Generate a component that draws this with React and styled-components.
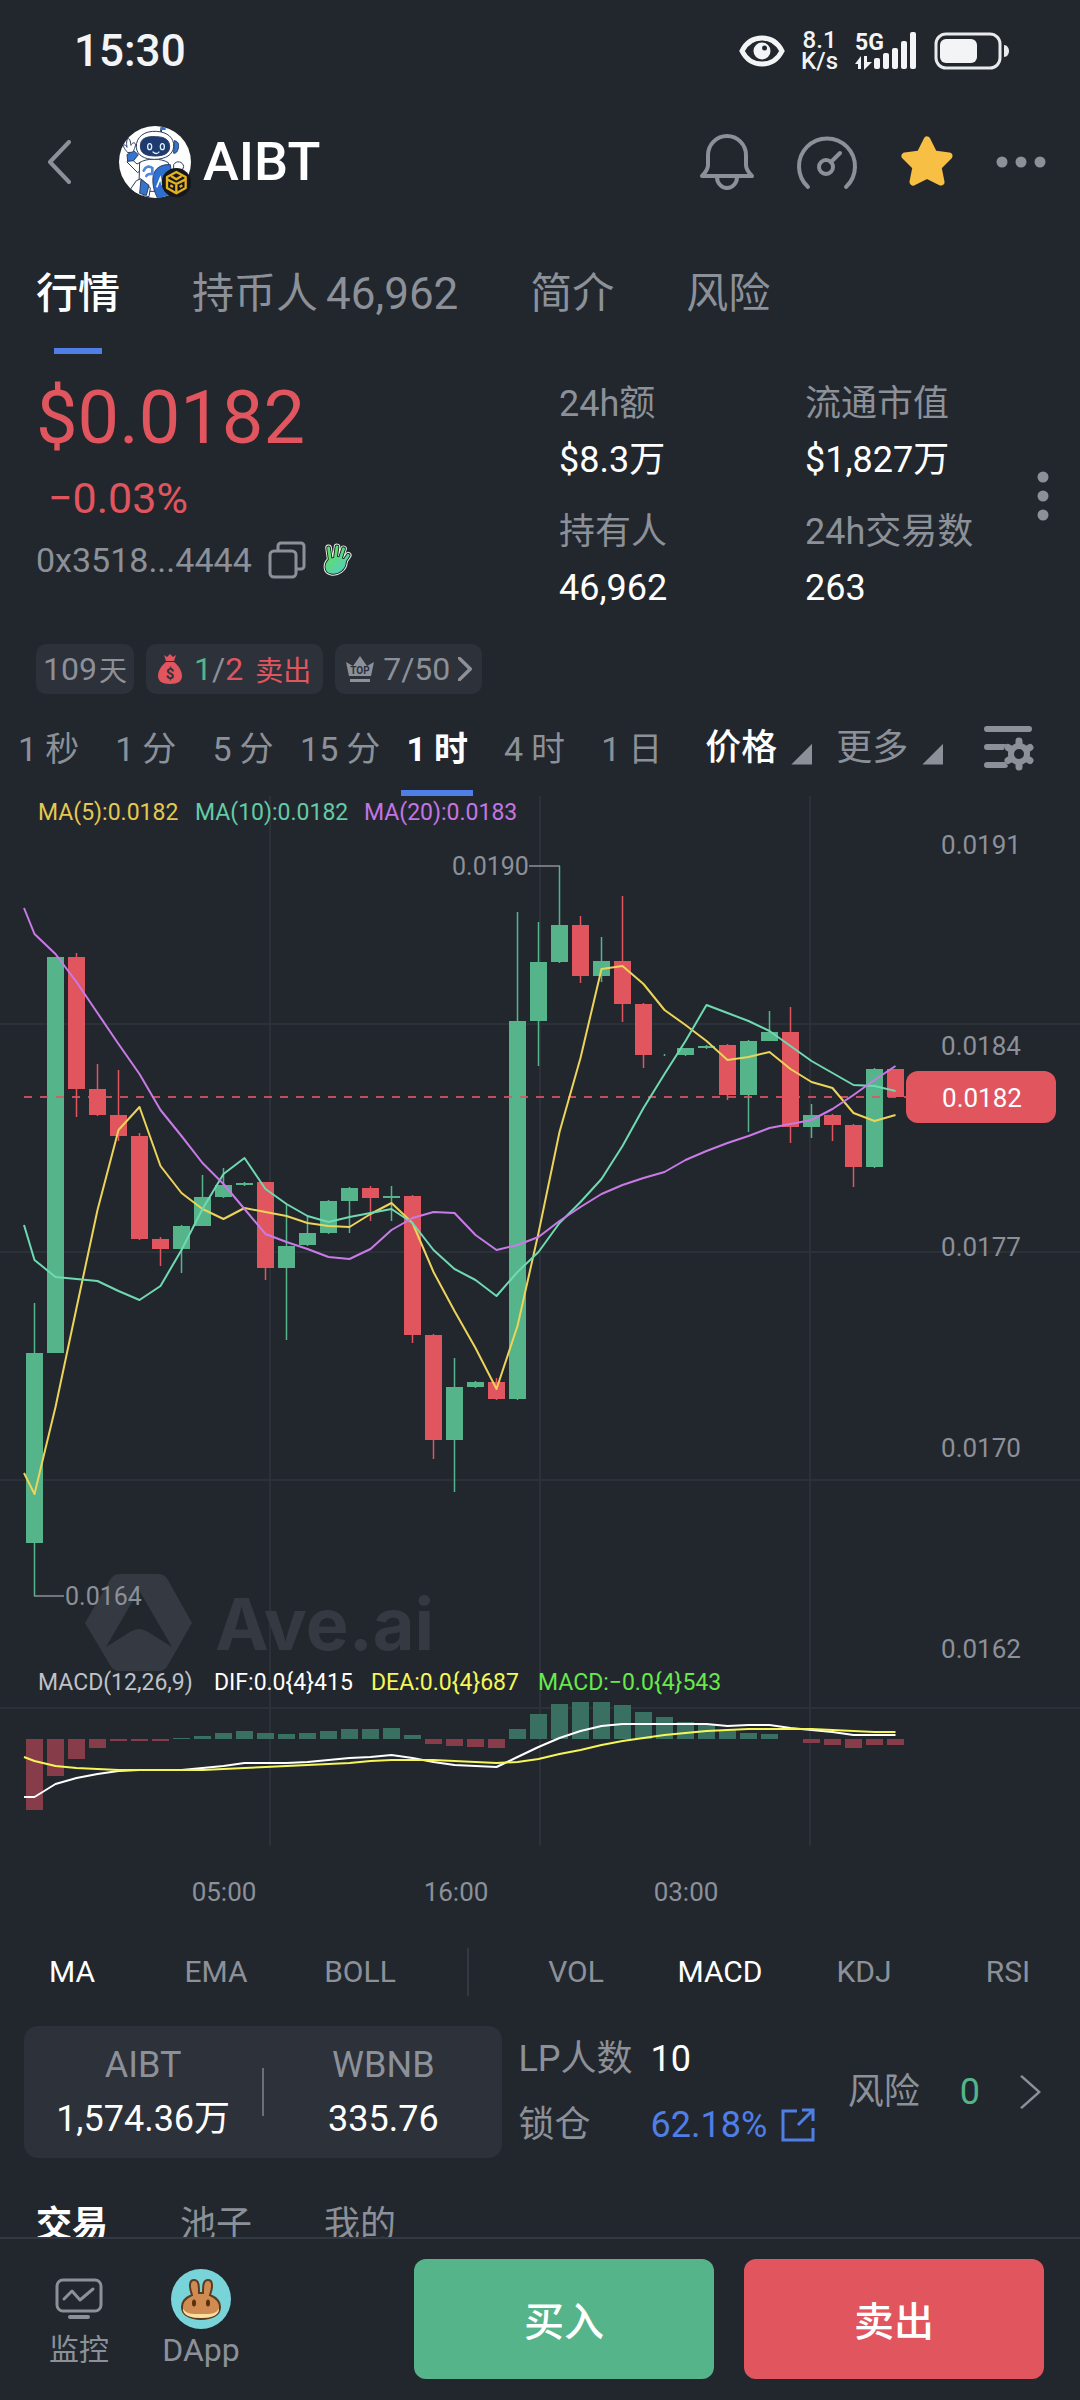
import React, { useState } from 'react';
import styled, { createGlobalStyle } from 'styled-components';

const UP = '#55b489';
const DOWN = '#e1555f';
const GREY = '#8c9098';
const BLUE = '#4f7ee6';
const PANEL = '#2c313a';
const BG = '#22272e';

// [open/close top, open/close bottom, high, low, rising]
const CANDLES = [
  [1353, 1543, 1303, 1596, 1], [957, 1353, 957, 1353, 1], [957, 1089, 953, 1117, 0], [1089, 1115, 1064, 1116, 0],
  [1115, 1136, 1070, 1141, 0], [1136, 1239, 1133, 1240, 0], [1239, 1249, 1237, 1266, 0], [1226, 1249, 1225, 1273, 1],
  [1197, 1226, 1175, 1226, 1], [1185, 1197, 1168, 1198, 1], [1183, 1185, 1182, 1186, 1], [1182, 1268, 1182, 1280, 0],
  [1246, 1268, 1204, 1340, 1], [1233, 1245, 1216, 1246, 1], [1201, 1233, 1200, 1234, 1], [1188, 1201, 1187, 1233, 1],
  [1188, 1198, 1186, 1221, 0], [1196, 1198, 1186, 1221, 1], [1196, 1335, 1195, 1343, 0], [1335, 1440, 1334, 1459, 0],
  [1387, 1440, 1358, 1492, 1], [1382, 1387, 1381, 1388, 1], [1382, 1399, 1378, 1400, 0], [1021, 1399, 912, 1400, 1],
  [962, 1021, 922, 1066, 1], [925, 962, 866, 963, 1], [925, 976, 916, 983, 0], [961, 976, 937, 982, 1],
  [961, 1004, 896, 1022, 0], [1004, 1055, 1003, 1068, 0], [1055, 1055, 1054, 1056, 1], [1048, 1055, 1048, 1056, 1],
  [1046, 1048, 1045, 1049, 1], [1045, 1095, 1044, 1100, 0], [1041, 1095, 1040, 1132, 1], [1032, 1041, 1011, 1041, 1],
  [1032, 1127, 1007, 1143, 0], [1115, 1127, 1104, 1138, 1], [1115, 1125, 1114, 1141, 0], [1125, 1167, 1124, 1187, 0],
  [1069, 1167, 1068, 1168, 1], [1069, 1097, 1069, 1097, 0]
];

// the first value of each line is where it enters the chart, left of the first candle
const MA5 = [1473, 1494, 1407, 1308, 1210, 1130, 1107, 1166, 1193, 1209, 1219, 1208, 1212, 1216, 1223, 1226, 1227, 1214, 1203, 1223, 1272, 1311, 1348, 1389, 1326, 1233, 1132, 1058, 969, 966, 984, 1010, 1025, 1041, 1060, 1057, 1052, 1069, 1082, 1088, 1113, 1121, 1115];
const MA10 = [1225, 1260, 1277, 1279, 1281, 1291, 1300, 1286, 1250, 1209, 1174, 1158, 1189, 1204, 1216, 1222, 1217, 1213, 1209, 1223, 1250, 1269, 1280, 1296, 1272, 1252, 1223, 1202, 1179, 1146, 1108, 1074, 1041, 1005, 1013, 1021, 1031, 1046, 1061, 1073, 1085, 1086, 1091];
const MA20 = [908, 934, 954, 982, 1013, 1044, 1074, 1110, 1136, 1163, 1184, 1209, 1234, 1242, 1249, 1257, 1259, 1249, 1230, 1218, 1212, 1213, 1235, 1250, 1245, 1237, 1221, 1207, 1194, 1185, 1178, 1172, 1160, 1151, 1143, 1136, 1128, 1124, 1120, 1109, 1095, 1080, 1066];
const DIF = [1797, 1797, 1784, 1778, 1774, 1771, 1770, 1770, 1770, 1768, 1766, 1763, 1763, 1763, 1762, 1760, 1758, 1757, 1755, 1758, 1762, 1765, 1766, 1767, 1757, 1747, 1738, 1731, 1726, 1724, 1724, 1724, 1724, 1724, 1726, 1725, 1725, 1728, 1730, 1732, 1735, 1735, 1735];
const DEA = [1757, 1761, 1766, 1768, 1769, 1770, 1770, 1770, 1770, 1770, 1769, 1768, 1767, 1766, 1765, 1764, 1763, 1761, 1760, 1760, 1760, 1761, 1762, 1763, 1762, 1759, 1754, 1750, 1745, 1741, 1738, 1735, 1733, 1731, 1730, 1729, 1729, 1729, 1729, 1730, 1731, 1732, 1732];
const MACD_BARS = [-71, -37, -20, -9, -2, -2, -2, 1, 3, 6, 8, 6, 5, 6, 8, 10, 10, 11, 4, -5, -7, -8, -9, 10, 25, 35, 37, 37, 34, 27, 22, 17, 14, 9, 6, 5, 0, -4, -6, -9, -6, -6];

const candleX = i => 34.5 + 21 * i;
const linePoints = values => values.map((y, i) => `${i === 0 ? 24 : candleX(i - 1)},${y}`).join(' ');

const PAGE_TABS = ['行情', '持币人', '简介', '风险'];
const PERIODS = [['1', '秒'], ['1', '分'], ['5', '分'], ['15', '分'], ['1', '时'], ['4', '时'], ['1', '日']];
const PRICE_LABELS = [['0.0191', 845], ['0.0184', 1046], ['0.0177', 1247], ['0.0170', 1448], ['0.0162', 1649]];
const TIME_LABELS = [['05:00', 224], ['16:00', 456], ['03:00', 686]];

const EyeIcon = () => (
  <svg width="46" height="32" viewBox="0 0 46 32">
    <path d="M3 16C8 6 15 3 23 3s15 3 20 13c-5 10-12 13-20 13S8 26 3 16z" fill="none" stroke="#f3f4f6" strokeWidth="5" />
    <circle cx="23" cy="16" r="8.5" fill="#f3f4f6" />
    <circle cx="25.5" cy="13" r="2.5" fill={BG} />
  </svg>
);

const SignalIcon = () => (
  <svg width="64" height="42" viewBox="0 0 64 42" fill="#f3f4f6">
    <text x="1" y="20" fontSize="23" fontWeight="700">5G</text>
    <path d="M1 34l6-8v13H4v-5zM10 26h3v6h5l-8 8z" />
    {[[20, 28], [29, 23], [38, 18], [47, 11], [56, 2]].map(([x, y]) => (
      <rect key={x} x={x} y={y} width="6" height={39 - y} rx="2" />
    ))}
  </svg>
);

const BatteryIcon = () => (
  <svg width="76" height="40" viewBox="0 0 76 40">
    <rect x="2" y="3" width="64" height="34" rx="10" fill="none" stroke="#e8eaec" strokeWidth="3" />
    <rect x="6" y="8" width="37" height="24" rx="6" fill="#f3f4f6" />
    <path d="M70 14c3 0 5 3 5 6s-2 6-5 6z" fill="#e8eaec" />
  </svg>
);

const Chevron = ({ left, width, height, stroke = 4 }) => (
  <svg width={width} height={height} viewBox="0 0 24 44" preserveAspectRatio="none" fill="none" stroke="currentColor" strokeWidth={stroke} strokeLinecap="round" strokeLinejoin="round">
    <path d={left ? 'M22 2L3 22l19 20' : 'M2 2l19 20L2 42'} />
  </svg>
);

const RobotAvatar = () => (
  <svg width="74" height="72" viewBox="60 18 222 216">
    <clipPath id="avatarClip"><circle cx="168" cy="126" r="108" /></clipPath>
    <circle cx="168" cy="126" r="108" fill="#fff" />
    <g clipPath="url(#avatarClip)" stroke="#2b3d63" strokeWidth="3" strokeLinejoin="round">
      <path d="M186 36c0-10 0-14 4-18" fill="none" strokeWidth="6" />
      <path d="M186 18h14v12h-14z" fill="#2f6fd0" stroke="none" />
      <path d="M92 112l22 20 12-6 6 18-16 14-32-32z" fill="#fff" />
      <path d="M84 104l20-12 14 12-14 18-18 2z" fill="#3474cf" />
      <path d="M86 98c-6-8-14-16-12-22 4-4 8 2 10 6-2-10-2-24 4-26 6 0 6 12 8 20 2-6 8-10 12-6 4 6-2 16-6 26z" fill="#fff" />
      <path d="M122 128c20-14 64-14 86 0l4 62-20 24h-54l-18-24z" fill="#fff" />
      <path d="M112 82c-2-32 26-50 60-48 34 2 54 20 52 46-2 24-24 38-58 38-30 0-52-12-54-36z" fill="#fff" />
      <path d="M226 62c12 2 14 10 12 22-2 10-6 16-14 16z" fill="#3474cf" />
      <path d="M124 78c0-22 18-30 46-28 30 0 42 12 42 30 0 20-18 28-44 28-28 0-44-8-44-30z" fill="#1e3a6e" />
      <path d="M126 176l-14 6-18 26 16 16 40 6 4-26z" fill="#fff" />
      <path d="M126 178l24 18-8 30-20-6z" fill="#3474cf" />
      <path d="M224 134c8-14 28-10 30 6l-6 16-24-4z" fill="#fff" />
      <path d="M162 172c2-26 24-40 52-38l14 100h-52c-10-16-16-40-14-62z" fill="#2f6fd0" />
    </g>
    <g fill="none" strokeLinecap="round">
      <ellipse cx="152" cy="80" rx="6" ry="9" stroke="#dff2ff" strokeWidth="4" />
      <ellipse cx="190" cy="80" rx="6" ry="9" stroke="#dff2ff" strokeWidth="4" />
      <path d="M162 96c6 6 14 6 18 0" stroke="#dff2ff" strokeWidth="4" />
      <path d="M134 152c6-12 16-16 26-8v18c-8-2-16 2-18 6" stroke="#4f86e0" strokeWidth="8" />
      <path d="M174 200l10-26 5 20" stroke="#fff" strokeWidth="5" />
    </g>
    <circle cx="232" cy="188" r="44" fill="#15171c" />
    <g fill="none" stroke="#e3b21c" strokeWidth="7" strokeLinejoin="round">
      <path d="M232 156l28 15v33l-28 16-28-16v-33z" />
      <path d="M204 178l28 14 28-14M232 192v26M216 168l16 10 16-10M214 196l8 5M250 196l-8 5" />
    </g>
  </svg>
);

const BellIcon = () => (
  <svg width="56" height="58" viewBox="0 0 56 58" fill="none" stroke="currentColor" strokeWidth="4" strokeLinecap="round" strokeLinejoin="round">
    <path d="M9 32V22a19 19 0 0 1 38 0v10c0 4 2 7 6 11H3c4-4 6-7 6-11z" />
    <path d="M18 44a10 11 0 0 0 20 0" />
  </svg>
);

const GaugeIcon = () => (
  <svg width="62" height="58" viewBox="0 0 62 58" fill="none" stroke="currentColor" strokeWidth="4" strokeLinecap="round">
    <path d="M12 54A28 28 0 1 1 50 54" />
    <circle cx="30" cy="34" r="7" />
    <path d="M35 29l9-9" />
  </svg>
);

const StarIcon = () => (
  <svg width="56" height="54" viewBox="0 0 56 54" fill="#f7bf43" stroke="#f7bf43" strokeWidth="7" strokeLinejoin="round">
    <path d="M28 5l7 14 15 2-11 11 3 15-14-7-14 7 3-15L6 21l15-2z" />
  </svg>
);

const DotsIcon = ({ vertical }) => (
  <svg width={vertical ? 14 : 50} height={vertical ? 50 : 14} viewBox={vertical ? '0 0 14 50' : '0 0 50 14'} fill="currentColor">
    {[6, 25, 44].map(p => <circle key={p} cx={vertical ? 7 : p} cy={vertical ? p : 7} r="5.500" />)}
  </svg>
);

const CopyIcon = () => (
  <svg width="38" height="38" viewBox="0 0 38 38" fill="none" stroke="currentColor" strokeWidth="3" strokeLinejoin="round">
    <rect x="2" y="10" width="26" height="26" rx="4" />
    <path d="M10 10V5a3 3 0 0 1 3-3h20a3 3 0 0 1 3 3v20a3 3 0 0 1-3 3h-5" />
  </svg>
);

const HandIcon = () => (
  <svg width="30" height="34" viewBox="0 0 32 36">
    <defs>
      <linearGradient id="hand" x1="0" y1="0" x2="32" y2="36" gradientUnits="userSpaceOnUse">
        <stop offset="0.300" stopColor="#5fdc6c" />
        <stop offset="1" stopColor="#52c9de" />
      </linearGradient>
    </defs>
    <g fill="none" strokeLinecap="round" strokeLinejoin="round">
      {[['#eef5f2', 7], ['#16241f', 5], ['url(#hand)', 3]].map(([color, width]) => (
        <g key={color} stroke={color} strokeWidth={width}>
          <path d="M9 19L7 5M14 18L16 4M19 18L23 6M22 22L28 13" />
          <path d="M8 19c-4 4-4 11 2 12s14-3 14-12l-8-3z" fill={color} />
        </g>
      ))}
    </g>
  </svg>
);

const BagIcon = () => (
  <svg width="24" height="30" viewBox="0 0 24 30">
    <path d="M6 1l3 2 3-3 3 3 3-2-2 6H8zM8 8h8c5 4 8 9 8 14 0 5-4 8-12 8S0 27 0 22C0 17 3 12 8 8z" fill={DOWN} />
    <text x="12" y="25" textAnchor="middle" fontSize="15" fontWeight="700" fill={PANEL}>$</text>
  </svg>
);

const CrownIcon = () => (
  <svg width="30" height="28" viewBox="0 0 30 28">
    <path d="M1 7l7 4 7-10 7 10 7-4-3 14H4zM5 24h20v3H5z" fill={GREY} />
    <text x="15" y="19" textAnchor="middle" fontSize="10" fontWeight="700" fill={PANEL}>TOP</text>
  </svg>
);

const ChartSettingsIcon = () => (
  <svg width="50" height="46" viewBox="0 0 50 46">
    <path d="M3 4h42M3 22h18M3 40h18" stroke={GREY} strokeWidth="6" strokeLinecap="round" />
    <circle cx="35" cy="29" r="16" fill={BG} />
    <circle cx="35" cy="29" r="11" fill={GREY} />
    <path d="M35 16v26M24 22.500l22 13M24 35.500l22-13" stroke={GREY} strokeWidth="7" strokeLinecap="round" />
    <circle cx="35" cy="29" r="5" fill={BG} />
  </svg>
);

const ExternalIcon = () => (
  <svg width="34" height="34" viewBox="0 0 34 34" fill="none" stroke="currentColor" strokeWidth="3">
    <path d="M16 3H2v29h30V20M21 2h11v11M32 2L17 17" />
  </svg>
);

const MonitorIcon = () => (
  <svg width="48" height="42" viewBox="0 0 48 42" fill="none" stroke="currentColor" strokeWidth="3" strokeLinecap="round" strokeLinejoin="round">
    <rect x="2" y="2" width="44" height="31" rx="6" />
    <path d="M9 21l8-8 8 9 13-11" />
    <path d="M15 39h18" strokeWidth="4" />
  </svg>
);

const BunnyIcon = () => (
  <svg width="60" height="60" viewBox="0 0 60 60">
    <circle cx="30" cy="30" r="30" fill="#79d4da" />
    <g fill="#d08b52" stroke="#5b3a20" strokeWidth="2">
      <path d="M21 26c-3-8-3-15 2-15s5 6 5 13h4c0-7 0-13 5-13s5 7 2 15c7 3 10 7 10 12 0 8-8 12-19 12s-19-4-19-12c0-5 3-9 10-12z" />
    </g>
    <path d="M12 39c2 6 8 6 18 6s16 0 18-6c1 7-7 10-18 10s-19-3-18-10z" fill="#fbe0a0" />
    <ellipse cx="23" cy="34" rx="2" ry="3.500" fill="#5b2f0c" />
    <ellipse cx="37" cy="34" rx="2" ry="3.500" fill="#5b2f0c" />
  </svg>
);

const PriceChart = () => (
  <ChartSvg viewBox="0 796 1080 1128" role="img" aria-label="AIBT">
    <g stroke="#2c3139" strokeWidth="2">
      {[270, 540, 810].map(x => <path key={x} d={`M${x} 796V1846`} />)}
      {[1024, 1252, 1480, 1708].map(y => <path key={y} d={`M0 ${y}H1080`} />)}
    </g>

    <g fill="#353941">
      <path fillRule="evenodd" d="M120 1574h38q7 0 10 6l24 43-24 42q-3 6-10 6h-38q-7 0-10-6l-25-42 25-43q3-6 10-6zM139 1590l-33 57 24-15q9-6 18 0l24 15z" />
      <text x="215" y="1650" fontSize="72" fontWeight="700" fontFamily="Inter, sans-serif">Ave.ai</text>
    </g>

    {CANDLES.map(([top, bottom, high, low, rising], i) => (
      <g key={i} fill={rising ? UP : DOWN}>
        <rect x={candleX(i) - 0.75} y={high} width="1.500" height={low - high} />
        <rect x={candleX(i) - 8.5} y={top} width="17" height={bottom - top} />
      </g>
    ))}
    {MACD_BARS.map((h, i) => (
      <rect key={i} x={candleX(i) - 8.5} y={h > 0 ? 1739 - h : 1739} width="17" height={Math.abs(h)} fill={h > 0 ? '#3a7062' : '#863d49'} />
    ))}

    <path d="M24 1097H906" stroke={DOWN} strokeOpacity="0.850" strokeWidth="2" strokeDasharray="8 8" />
    <g fill="none" strokeWidth="2" strokeLinejoin="round">
      <polyline points={linePoints(MA5)} stroke="#ecd35a" />
      <polyline points={linePoints(MA10)} stroke="#6fd9b2" />
      <polyline points={linePoints(MA20)} stroke="#c87be6" />
      <polyline points={linePoints(DIF)} stroke="#fff" />
      <polyline points={linePoints(DEA)} stroke="#f6f756" />
    </g>
    <path d="M529 866H560M34 1596H64" stroke={GREY} strokeWidth="1.500" />

    <g fontSize="23">
      <text x="38" y="820" fill="#e5c94f">MA(5):0.0182</text>
      <text x="195" y="820" fill="#63cba6">MA(10):0.0182</text>
      <text x="364" y="820" fill="#c574e3">MA(20):0.0183</text>
      <text x="38" y="1690" fill="#bfc2c7">MACD(12,26,9)</text>
      <text x="214" y="1690" fill="#fff">DIF:0.0{'{4}'}415</text>
      <text x="371" y="1690" fill="#f6f756">DEA:0.0{'{4}'}687</text>
      <text x="538" y="1690" fill="#67e94c">MACD:−0.0{'{4}'}543</text>
    </g>
    <g fontSize="25" fill={GREY}>
      <text x="452" y="875">0.0190</text>
      <text x="65" y="1605">0.0164</text>
    </g>
    <g fontSize="26" fill={GREY} textAnchor="middle">
      {PRICE_LABELS.map(([label, y]) => <text key={label} x="981" y={y + 9}>{label}</text>)}
      {TIME_LABELS.map(([label, x]) => <text key={label} x={x} y="1901">{label}</text>)}
      <rect x="906" y="1071" width="150" height="52" rx="12" fill={DOWN} />
      <text x="982" y="1107" fill="#fff">0.0182</text>
    </g>
  </ChartSvg>
);

const IndicatorButton = ({ name, active, onClick }) => (
  <Indicator type="button" $active={active} onClick={() => onClick(name)}>{name}</Indicator>
);

const App = () => {
  const [tab, setTab] = useState('行情');
  const [period, setPeriod] = useState(4);
  const [overlay, setOverlay] = useState('MA');
  const [indicator, setIndicator] = useState('MACD');

  return (
    <Screen>
      <GlobalStyle />
      <StatusBar>
        <Clock>15:30</Clock>
        <StatusIcons>
          <EyeIcon />
          <NetSpeed><span>8.1</span><span>K/s</span></NetSpeed>
          <SignalIcon />
          <BatteryIcon />
        </StatusIcons>
      </StatusBar>

      <Header>
        <IconButton type="button" aria-label="返回"><Chevron left width="24" height="44" /></IconButton>
        <TokenTitle>
          <RobotAvatar />
          AIBT
        </TokenTitle>
        <HeaderActions>
          <IconButton type="button" aria-label="提醒"><BellIcon /></IconButton>
          <IconButton type="button" aria-label="测速"><GaugeIcon /></IconButton>
          <IconButton type="button" aria-label="收藏"><StarIcon /></IconButton>
          <IconButton type="button" aria-label="菜单"><DotsIcon /></IconButton>
        </HeaderActions>
      </Header>

      <Content>
        <PageTabs>
          {PAGE_TABS.map(name => (
            <PageTab key={name} type="button" $active={tab === name} onClick={() => setTab(name)}>
              {name}
              {name === '持币人' && <HolderCount>46,962</HolderCount>}
            </PageTab>
          ))}
        </PageTabs>

        <Overview>
          <PriceColumn>
            <Price>$0.0182</Price>
            <Change>−0.03%</Change>
            <Address>
              0x3518...4444
              <IconButton type="button" aria-label="复制"><CopyIcon /></IconButton>
              <HandIcon />
            </Address>
          </PriceColumn>
          <Stats>
            <Stat><dt>24h额</dt><dd>$8.3万</dd></Stat>
            <Stat><dt>流通市值</dt><dd>$1,827万</dd></Stat>
            <Stat><dt>持有人</dt><dd>46,962</dd></Stat>
            <Stat><dt>24h交易数</dt><dd>263</dd></Stat>
          </Stats>
          <IconButton type="button" aria-label="详情"><DotsIcon vertical /></IconButton>
        </Overview>

        <Chips>
          <Chip><Figure>109</Figure>天</Chip>
          <Chip>
            <BagIcon />
            <Figure><Tint $color={UP}>1</Tint>/<Tint $color={DOWN}>2</Tint></Figure>
            <Tint $color={DOWN}>卖出</Tint>
          </Chip>
          <Chip as="button" type="button">
            <CrownIcon />
            <Figure>7/50</Figure>
            <Chevron width="14" height="24" stroke={6} />
          </Chip>
        </Chips>

        <Periods>
          {PERIODS.map(([count, unit], i) => (
            <Period key={count + unit} type="button" $active={period === i} onClick={() => setPeriod(i)}>
              <span>{count}</span><span>{unit}</span>
            </Period>
          ))}
          <PeriodTools>
            <MenuButton type="button" $active>价格<Corner /></MenuButton>
            <MenuButton type="button">更多<Corner /></MenuButton>
            <SettingsButton type="button" aria-label="图表设置"><ChartSettingsIcon /></SettingsButton>
          </PeriodTools>
        </Periods>

        <PriceChart />

        <Indicators>
          {['MA', 'EMA', 'BOLL'].map(name => (
            <IndicatorButton key={name} name={name} active={overlay === name} onClick={setOverlay} />
          ))}
          <Divider $dim />
          {['VOL', 'MACD', 'KDJ', 'RSI'].map(name => (
            <IndicatorButton key={name} name={name} active={indicator === name} onClick={setIndicator} />
          ))}
        </Indicators>

        <PoolRow>
          <PoolCard>
            <PoolToken><span>AIBT</span><strong>1,574.36万</strong></PoolToken>
            <Divider />
            <PoolToken><span>WBNB</span><strong>335.76</strong></PoolToken>
          </PoolCard>
          <LiquidityGrid>
            <span>LP人数</span><strong>10</strong>
            <span>锁仓</span><LockLink href="#lock">62.18%<ExternalIcon /></LockLink>
          </LiquidityGrid>
          <RiskButton type="button">
            风险
            <Tint $color={UP}>0</Tint>
            <Chevron width="22" height="34" stroke={3} />
          </RiskButton>
        </PoolRow>

        <TradeTabs>
          <TradeTab type="button" $active>交易</TradeTab>
          <TradeTab type="button">池子</TradeTab>
          <TradeTab type="button">我的</TradeTab>
        </TradeTabs>
      </Content>

      <Footer>
        <Shortcut type="button"><ShortcutIcon><MonitorIcon /></ShortcutIcon>监控</Shortcut>
        <Shortcut type="button"><ShortcutIcon><BunnyIcon /></ShortcutIcon><Figure>DApp</Figure></Shortcut>
        <TradeActions>
          <TradeButton type="button" $color={UP}>买入</TradeButton>
          <TradeButton type="button" $color={DOWN}>卖出</TradeButton>
        </TradeActions>
      </Footer>
    </Screen>
  );
};

const GlobalStyle = createGlobalStyle`
  * {
    box-sizing: border-box;
  }

  body {
    margin: 0;
    background: ${BG};
    color: #fff;
    font-family: Roboto, "Noto Sans CJK SC", sans-serif;
  }

  button {
    padding: 0;
    border: 0;
    background: none;
    color: inherit;
    font: inherit;
    white-space: nowrap;
    cursor: pointer;
  }

  svg {
    display: block;
    flex: none;
  }
`;

const Screen = styled.div`
  display: flex;
  flex-direction: column;
  height: 100vh;
`;

const StatusBar = styled.div`
  display: flex;
  flex: none;
  align-items: center;
  justify-content: space-between;
  height: 102px;
  padding: 0 70px 0 74px;
`;

const Clock = styled.span`
  font-size: 44px;
  font-weight: 500;
  color: #f3f4f6;
`;

const StatusIcons = styled.div`
  display: flex;
  align-items: center;
  gap: 16px;
`;

const NetSpeed = styled.div`
  display: flex;
  flex-direction: column;
  align-items: center;
  font-size: 24px;
  font-weight: 500;
  line-height: 21px;
  color: #f3f4f6;
`;

const Header = styled.header`
  display: flex;
  flex: none;
  align-items: center;
  height: 120px;
  padding: 0 34px 0 47px;
`;

const IconButton = styled.button`
  display: flex;
  flex: none;
  color: ${GREY};
`;

const TokenTitle = styled.h1`
  display: flex;
  align-items: center;
  gap: 10px;
  margin: 0 0 0 48px;
  font-size: 54px;
  font-weight: 500;
  line-height: 72px;
`;

const HeaderActions = styled.div`
  display: flex;
  align-items: center;
  gap: 41px;
  margin-left: auto;
`;

const Content = styled.main`
  flex: 1;
  min-height: 0;
  overflow: hidden;
`;

const PageTabs = styled.nav`
  display: flex;
  gap: 72px;
  padding: 42px 36px 0;
`;

const PageTab = styled.button`
  display: flex;
  padding-bottom: 30px;
  background: linear-gradient(${props => (props.$active ? BLUE : 'transparent')} 0 0) bottom / 48px 6px no-repeat;
  font-size: 42px;
  font-weight: ${props => (props.$active ? 500 : 400)};
  line-height: 60px;
  color: ${props => (props.$active ? '#fff' : GREY)};
`;

const HolderCount = styled.span`
  margin-left: 8px;
  font-size: 44px;
`;

const Overview = styled.section`
  display: flex;
  align-items: center;
  padding: 22px 30px 0 36px;
`;

const PriceColumn = styled.div`
  display: flex;
  flex: 523;
  flex-direction: column;
  align-self: flex-start;
  color: ${DOWN};
`;

const Price = styled.strong`
  font-size: 74px;
  font-weight: 400;
  line-height: 84px;
`;

const Change = styled.span`
  margin: 14px 0 16px 12px;
  font-size: 43px;
  line-height: 48px;
`;

const Address = styled.div`
  display: flex;
  align-items: center;
  gap: 16px;
  font-size: 34px;
  line-height: 44px;
  color: ${GREY};
`;

const Stats = styled.dl`
  display: grid;
  flex: 477;
  grid-template-columns: 246fr 231fr;
  row-gap: 16px;
  margin: 0;
`;

const Stat = styled.div`
  font-size: 36px;
  line-height: 56px;
  white-space: nowrap;

  dt {
    color: ${GREY};
  }

  dd {
    margin: 0;
  }
`;

const Chips = styled.div`
  display: flex;
  gap: 12px;
  padding: 28px 36px 0;
`;

const Chip = styled.div`
  display: flex;
  align-items: center;
  gap: 8px;
  height: 50px;
  padding: 0 10px;
  border-radius: 10px;
  background: ${PANEL};
  font-size: 28px;
  color: ${GREY};

  &:first-child {
    gap: 2px;
    padding: 0 7px;
  }

  &:nth-child(2) {
    gap: 12px;
    padding: 0 12px;
  }
`;

const Figure = styled.span`
  font-size: 32px;
`;

const Tint = styled.span`
  color: ${props => props.$color};
`;

const Periods = styled.div`
  display: flex;
  height: 102px;
`;

const Period = styled.button`
  display: flex;
  flex: 0 0 9%;
  justify-content: center;
  gap: 8px;
  padding: 31px 0 23px;
  background: linear-gradient(${props => (props.$active ? BLUE : 'transparent')} 0 0) bottom / 72px 6px no-repeat;
  font-size: 34px;
  font-weight: ${props => (props.$active ? 700 : 400)};
  line-height: 48px;
  color: ${props => (props.$active ? '#fff' : GREY)};
`;

const PeriodTools = styled.div`
  display: flex;
  flex: 1;
  align-items: center;
  gap: 24px;
  padding: 6px 46px 0 25px;
`;

const MenuButton = styled.button`
  display: flex;
  align-items: center;
  gap: 14px;
  font-size: 36px;
  font-weight: ${props => (props.$active ? 500 : 400)};
  line-height: 48px;
  color: ${props => (props.$active ? '#fff' : GREY)};
`;

const SettingsButton = styled(IconButton)`
  margin-left: auto;
`;

const Corner = styled.i`
  width: 21px;
  height: 21px;
  margin-top: 12px;
  background: ${GREY};
  clip-path: polygon(100% 0, 100% 100%, 0 100%);
`;

const ChartSvg = styled.svg`
  width: 100%;
`;

const Indicators = styled.div`
  display: grid;
  grid-template-columns: repeat(3, 2fr) 1fr repeat(4, 2fr);
  align-items: center;
  height: 96px;
`;

const Indicator = styled.button`
  font-size: 30px;
  line-height: 48px;
  color: ${props => (props.$active ? '#fff' : GREY)};
`;

const Divider = styled.i`
  justify-self: center;
  width: 2px;
  height: 48px;
  background: ${props => (props.$dim ? '#343840' : '#6b6f77')};
`;

const PoolRow = styled.section`
  display: flex;
  align-items: center;
  margin-top: 6px;
  padding: 0 38px 0 24px;
  font-size: 36px;
  white-space: nowrap;
  color: ${GREY};

  strong {
    font-weight: 400;
    color: #fff;
  }
`;

const PoolCard = styled.div`
  display: flex;
  flex: 0 0 47%;
  align-items: center;
  height: 132px;
  border-radius: 14px;
  background: ${PANEL};
`;

const PoolToken = styled.div`
  display: flex;
  flex: 1;
  flex-direction: column;
  align-items: center;
  line-height: 54px;
`;

const LiquidityGrid = styled.div`
  display: grid;
  grid-template-columns: auto auto;
  column-gap: 18px;
  margin-left: 16px;
  line-height: 66px;
`;

const LockLink = styled.a`
  display: flex;
  align-items: center;
  gap: 14px;
  color: ${BLUE};
  text-decoration: none;
`;

const RiskButton = styled.button`
  display: flex;
  align-items: center;
  gap: 40px;
  margin-left: auto;
  line-height: 48px;
`;

const TradeTabs = styled.nav`
  display: flex;
  gap: 72px;
  padding: 43px 36px 24px;
`;

const TradeTab = styled.button`
  font-size: 36px;
  font-weight: ${props => (props.$active ? 700 : 400)};
  line-height: 48px;
  color: ${props => (props.$active ? '#fff' : GREY)};
`;

const Footer = styled.footer`
  display: flex;
  flex: none;
  align-items: center;
  height: 163px;
  padding: 0 36px 2px;
  border-top: 2px solid #343840;
`;

const Shortcut = styled.button`
  display: flex;
  flex: 0 0 86px;
  flex-direction: column;
  align-items: center;
  gap: 2px;
  margin-right: 36px;
  font-size: 30px;
  line-height: 38px;
  color: ${GREY};
`;

const ShortcutIcon = styled.span`
  display: flex;
  align-items: center;
  height: 60px;
`;

const TradeActions = styled.div`
  display: grid;
  flex: 1;
  grid-template-columns: 1fr 1fr;
  gap: 30px;
  margin-left: 134px;
`;

const TradeButton = styled.button`
  height: 120px;
  border-radius: 12px;
  background: ${props => props.$color};
  font-size: 40px;
  font-weight: 500;
  color: #fff;
`;

export default App;
